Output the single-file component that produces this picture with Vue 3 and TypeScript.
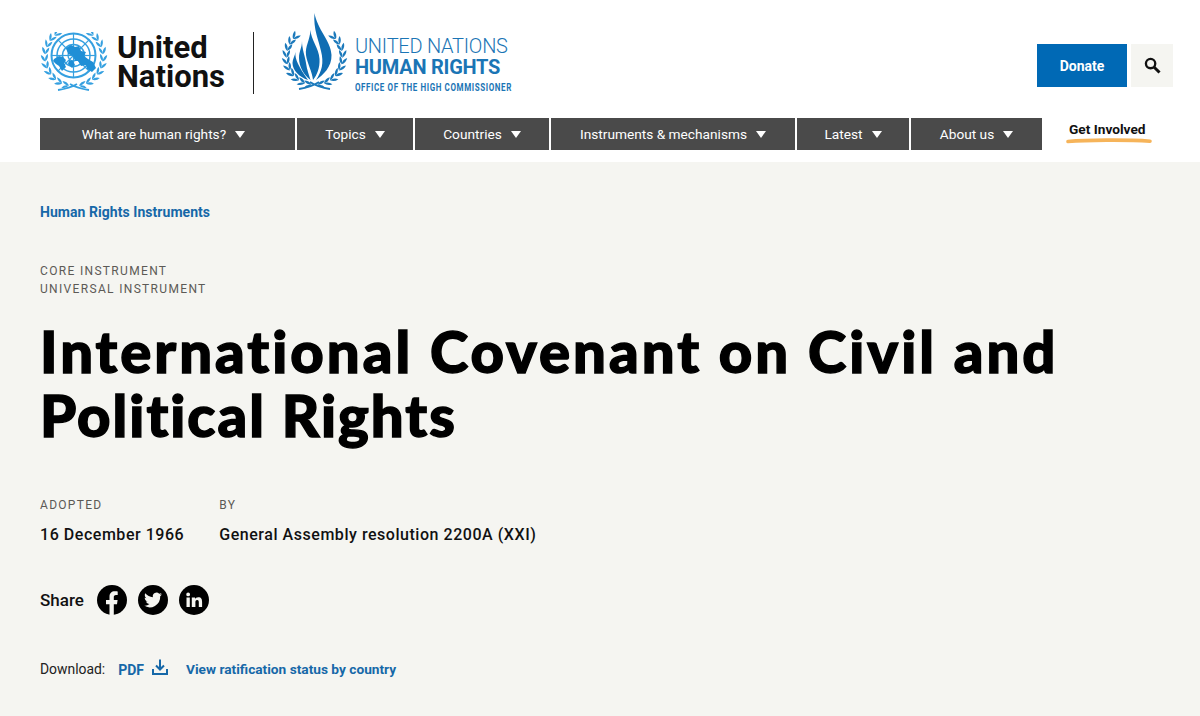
<script setup lang="ts">
const navItems = [
  { label: 'What are human rights?', width: 255 },
  { label: 'Topics', width: 116 },
  { label: 'Countries', width: 134 },
  { label: 'Instruments & mechanisms', width: 244 },
  { label: 'Latest', width: 112 },
  { label: 'About us', width: 131 },
]

// leaves along an arc, two rows per branch, mirrored left and right
function wreath(cx: number, cy: number, r: number, from: number, to: number, count: number, len: number) {
  const leaves: string[] = []
  const f = (n: number) => n.toFixed(1)
  for (const side of [-1, 1]) {
    for (let i = 0; i < count; i++) {
      const th = ((from + ((to - from) * i) / (count - 1)) * Math.PI) / 180
      const x = cx + side * r * Math.cos(th)
      const y = cy - r * Math.sin(th)
      const tx = -side * Math.sin(th)
      const ty = -Math.cos(th)
      for (const phi of [-0.45, 0.45]) {
        const dx = (tx * Math.cos(phi) - ty * Math.sin(phi)) * len
        const dy = (tx * Math.sin(phi) + ty * Math.cos(phi)) * len
        const nx = -dy * 0.3
        const ny = dx * 0.3
        leaves.push(
          `M${f(x)} ${f(y)}Q${f(x + dx / 2 + nx)} ${f(y + dy / 2 + ny)} ${f(x + dx)} ${f(y + dy)}Q${f(x + dx / 2 - nx)} ${f(y + dy / 2 - ny)} ${f(x)} ${f(y)}Z`,
        )
      }
    }
  }
  return leaves
}

const unLeaves = wreath(34, 25, 29, -80, 48, 10, 8)
const hrLeaves = wreath(33.5, 44, 28, -84, 40, 10, 8.5)
const spokes = [0, 45, 90, 135, 180, 225, 270, 315]

function spokeEnd(deg: number) {
  return {
    x2: 33.5 + 22 * Math.cos((deg * Math.PI) / 180),
    y2: 23.5 + 22 * Math.sin((deg * Math.PI) / 180),
  }
}
</script>

<template>
  <div class="page">
    <header class="site-header">
      <div class="top-row">
        <div class="logos">
          <a class="un-logo">
            <svg class="un-emblem" width="68" height="59" viewBox="0 0 68 59">
              <g fill="none" stroke="#35a0e0">
                <circle cx="33.500" cy="23.500" r="22" stroke-width="2" />
                <circle cx="33.500" cy="23.500" r="16.500" stroke-width="1.500" />
                <circle cx="33.500" cy="23.500" r="11" stroke-width="1.500" />
                <circle cx="33.500" cy="23.500" r="5.500" stroke-width="1.300" />
                <line v-for="s in spokes" :key="s" x1="33.500" y1="23.500" v-bind="spokeEnd(s)" stroke-width="1.200" />
              </g>
              <g fill="#1f8fd6">
                <path d="M26 16l5-3 4 2 4-1 2 5 5 1-2 4 4 3 5 3 3 6-4 4-5-3-1-4-5 1-3-5-3 0-2-5-5-2z" />
                <path d="M14 27l5-3 4 1 3 3-2 3 2 4-4 4-3-5-3-2-3-3z" />
                <path d="M29 28l4 1 2 4-3 3-4-4z" />
              </g>
              <path v-for="(d, i) in unLeaves" :key="i" :d="d" fill="#35a0e0" />
              <path d="M18 58C25 57 32 55 37 52M49 58C42 57 35 55 30 52" fill="none" stroke="#35a0e0" stroke-width="1.800" />
            </svg>
            <span class="un-name">United<br />Nations</span>
          </a>
          <span class="divider"></span>
          <a class="hr-logo">
            <svg class="hr-emblem" width="67" height="77" viewBox="0 0 67 77">
              <path v-for="(d, i) in hrLeaves" :key="i" :d="d" fill="#1b79bb" />
              <path d="M18 76C25 75 32 73 38 69M49 76C42 75 35 73 29 69" fill="none" stroke="#1b79bb" stroke-width="1.800" />
              <g fill="#0f6db3">
                <path d="M33.500 0C36 16 50 28 50.500 42C51 54 42 62 35 67C41 58 43 50 40 38C38 28 32 16 33.500 0Z" />
                <path d="M29.500 17C30 27 38 35 38.500 46C39 55 36 62 32 67C31 58 26 50 25 42C24 33 29 27 29.500 17Z" />
                <path d="M21 28C21 36 24 43 25 50C26 57 28 62 29.500 67C23 62 18 54 18 45C18 38 21 35 21 28Z" />
                <path d="M14.500 39C13.500 46 18 54 27 67C18 64 11.500 57 11.500 50C11.500 46 14 43 14.500 39Z" />
              </g>
            </svg>
            <span class="hr-text">
              <span class="hr-line1">UNITED NATIONS</span>
              <span class="hr-line2">HUMAN RIGHTS</span>
              <span class="hr-line3">OFFICE OF THE HIGH COMMISSIONER</span>
            </span>
          </a>
        </div>
        <div class="actions">
          <a class="donate">Donate</a>
          <button class="search" aria-label="Search">
            <svg width="17" height="17" viewBox="0 0 16 16" fill="none" stroke="#111">
              <circle cx="6.200" cy="6.200" r="4.400" stroke-width="2.200" />
              <path d="M9.600 9.600L14.600 14.600" stroke-width="2.800" />
            </svg>
          </button>
        </div>
      </div>
      <nav class="main-nav">
        <div class="nav-items">
          <a
            v-for="item in navItems"
            :key="item.label"
            class="nav-item"
            :style="{ width: item.width + 'px' }"
          >
            {{ item.label }}<span class="caret"></span>
          </a>
        </div>
        <a class="get-involved">
          Get Involved
          <svg class="swash" width="86" height="7" viewBox="0 0 86 7">
            <path d="M2 4.500C20 3 60 2.500 84 4.200" fill="none" stroke="#f6b45a" stroke-width="3.600" stroke-linecap="round" />
          </svg>
        </a>
      </nav>
    </header>

    <main class="content">
      <a class="crumb">Human Rights Instruments</a>
      <div class="tags">
        <div>CORE INSTRUMENT</div>
        <div>UNIVERSAL INSTRUMENT</div>
      </div>
      <h1>International Covenant on Civil and <span class="second-line">Political Rights</span></h1>
      <div class="facts">
        <div>
          <div class="fact-label">ADOPTED</div>
          <div class="fact-value">16 December 1966</div>
        </div>
        <div>
          <div class="fact-label">BY</div>
          <div class="fact-value">General Assembly resolution 2200A (XXI)</div>
        </div>
      </div>
      <div class="share">
        <span class="share-label">Share</span>
        <svg width="30" height="30" viewBox="0 0 30 30">
          <circle cx="15" cy="15" r="15" fill="#000" />
          <path d="M12.500 30V19.200H9V15h3.500v-3.200c0-3.600 2.100-5.500 5.300-5.500 1.500 0 2.900.2 2.900.2V10h-1.700c-1.700 0-2.200 1-2.200 2.100V15h3.800l-.6 4.200h-3.200V30z" fill="#f5f5f1" />
        </svg>
        <svg width="30" height="30" viewBox="0 0 30 30">
          <circle cx="15" cy="15" r="15" fill="#000" />
          <path d="M24 9.300c-.7.3-1.400.5-2.100.6.800-.5 1.300-1.200 1.600-2-.7.400-1.500.7-2.300.9a3.700 3.700 0 0 0-6.300 3.400c-3-.2-5.800-1.600-7.600-3.900-1 1.700-.5 3.900 1.100 4.900-.6 0-1.200-.2-1.700-.5 0 1.800 1.300 3.400 3 3.700-.5.100-1.100.2-1.700.1.500 1.500 1.900 2.500 3.500 2.600A7.500 7.500 0 0 1 6 20.600a10.500 10.500 0 0 0 16.200-9.300c.7-.5 1.300-1.200 1.800-2z" fill="#f5f5f1" />
        </svg>
        <svg width="30" height="30" viewBox="0 0 30 30">
          <circle cx="15" cy="15" r="15" fill="#000" />
          <path d="M7.500 12.500h3.300V22H7.500zM9.150 7.500a1.900 1.900 0 1 1 0 3.800 1.900 1.900 0 0 1 0-3.800zM12.800 12.500H16v1.400c.5-.9 1.600-1.700 3.200-1.700 3.300 0 3.900 2.100 3.900 4.900V22h-3.300v-4.300c0-1.100 0-2.600-1.600-2.600s-1.800 1.200-1.800 2.500V22h-3.600z" fill="#f5f5f1" />
        </svg>
      </div>
      <div class="downloads">
        <span class="dl-label">Download:</span>
        <a class="link pdf">PDF</a>
        <svg class="dl-icon" width="16" height="16" viewBox="0 0 16 16" fill="none" stroke="#1668a8" stroke-width="2">
          <path d="M8 0.500V10M4 6.500L8 10.500L12 6.500" />
          <path d="M1 10V15H15V10" />
        </svg>
        <a class="link view">View ratification status by country</a>
      </div>
    </main>
  </div>
</template>

<style>
html,
body {
  margin: 0;
  background: #f5f5f1;
}
</style>

<style scoped>
.page {
  font-family: Roboto, "Liberation Sans", sans-serif;
  color: #111;
  height: 716px;
  overflow: hidden;
}

.site-header {
  background: #fff;
  padding: 0 27px 12px 40px;
  height: 150px;
}

.top-row {
  display: flex;
  justify-content: space-between;
  height: 118px;
}

.logos {
  display: flex;
  align-items: flex-start;
}

.un-logo {
  display: flex;
  padding-top: 32px;
}

.un-emblem {
  margin-right: 9px;
}

.un-name {
  font-size: 31px;
  font-weight: 700;
  line-height: 29px;
  color: #111;
  margin-top: 1px;
}

.divider {
  width: 1px;
  height: 62px;
  background: #222;
  margin: 32px 27px 0 28px;
}

.hr-logo {
  display: flex;
  padding-top: 13px;
}

.hr-emblem {
  margin-right: 7px;
}

.hr-text {
  display: flex;
  flex-direction: column;
  color: #1b75b5;
  padding-top: 23px;
}

.hr-line1 {
  font-size: 20px;
  font-weight: 300;
  line-height: 20px;
  letter-spacing: -0.25px;
}

.hr-line2 {
  font-size: 20px;
  font-weight: 700;
  line-height: 21px;
  letter-spacing: -0.25px;
  margin-top: 1px;
}

.hr-line3 {
  font-size: 10px;
  font-weight: 700;
  line-height: 14px;
  margin-top: 3px;
  letter-spacing: 0.75px;
  white-space: nowrap;
  transform: scaleX(0.8);
  transform-origin: left center;
}

.actions {
  display: flex;
  gap: 4px;
  padding-top: 44px;
  align-items: flex-start;
}

.donate {
  width: 90px;
  height: 43px;
  background: #0069b5;
  color: #fff;
  font-size: 14px;
  font-weight: 700;
  display: flex;
  align-items: center;
  justify-content: center;
}

.search {
  width: 42px;
  height: 43px;
  border: 0;
  padding: 0;
  background: #f5f5f1;
  display: flex;
  align-items: center;
  justify-content: center;
}

.main-nav {
  display: flex;
}

.nav-items {
  display: flex;
  gap: 2px;
}

.nav-item {
  box-sizing: border-box;
  height: 32px;
  background: #4a4a4a;
  color: #fff;
  font-size: 13.700px;
  display: flex;
  align-items: center;
  justify-content: center;
}

.nav-item:first-child {
  padding-right: 8px;
}

.caret {
  margin-left: 9px;
  border-left: 5px solid transparent;
  border-right: 5px solid transparent;
  border-top: 7px solid #fff;
}

.get-involved {
  margin-left: 27px;
  width: 80px;
  position: relative;
  font-size: 13.700px;
  font-weight: 700;
  white-space: nowrap;
  padding-top: 3px;
  color: #111;
}

.swash {
  position: absolute;
  left: -3px;
  top: 19px;
}

.content {
  padding: 0 40px;
  margin-top: 12px;
  background: #f5f5f1;
}

.crumb {
  display: block;
  padding-top: 29px;
  color: #1668a8;
  font-size: 14px;
  font-weight: 700;
  line-height: 18px;
  letter-spacing: 0.05px;
}

.tags {
  margin-top: 42px;
  font-size: 12px;
  line-height: 17.500px;
  letter-spacing: 1.330px;
  color: #5c5a56;
}

h1 {
  margin: 21px 0 0;
  font-family: Lato, sans-serif;
  font-weight: 900;
  font-size: 58px;
  line-height: 64px;
  letter-spacing: 3px;
  -webkit-text-stroke: 1.400px #000;
  color: #000;
}

.second-line {
  letter-spacing: 2px;
}

.facts {
  display: flex;
  gap: 35px;
  margin-top: 49px;
}

.fact-label {
  font-size: 12px;
  letter-spacing: 1.300px;
  line-height: 18px;
  color: #5c5a56;
}

.fact-value {
  font-size: 16px;
  font-weight: 500;
  line-height: 20px;
  margin-top: 11px;
  letter-spacing: 0.540px;
}

.share {
  display: flex;
  align-items: center;
  gap: 11px;
  margin-top: 40px;
}

.share-label {
  font-size: 17px;
  font-weight: 500;
  margin-right: 2px;
}

.downloads {
  display: flex;
  align-items: center;
  margin-top: 44px;
  font-size: 14px;
}

.dl-label {
  color: #222;
  margin-right: 13px;
  font-size: 13.900px;
}

.link {
  color: #1668a8;
  font-weight: 700;
}

.view {
  font-size: 13.700px;
}

.pdf {
  margin-right: 8px;
  padding-top: 3px;
}

.dl-icon {
  margin-right: 18px;
  margin-top: -3px;
}
</style>
